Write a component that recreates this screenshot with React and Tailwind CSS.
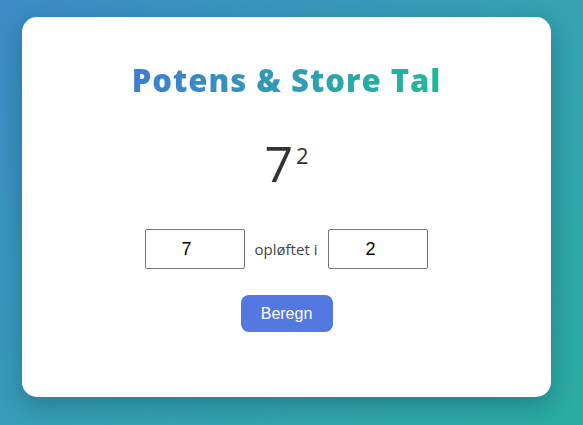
export default function App() {
  return (
    <div className="min-h-[425px] w-[583px] bg-[linear-gradient(135deg,#3d8bc7_0%,#36a0b6_50%,#2aaca0_100%)] pl-[22px] pt-[17px] font-['Open_Sans',sans-serif]">
      <div className="flex h-[380px] w-[529px] flex-col items-center rounded-[15px] bg-white shadow-[0_8px_24px_rgba(0,40,60,0.3)]">
        <h1 className="mt-[41px] bg-[linear-gradient(90deg,#3e7dd2,#22b99a)] bg-clip-text text-[31px] font-extrabold leading-[44px] tracking-[1px] text-transparent">
          Potens &amp; Store Tal
        </h1>
        <div className="mt-[36px] flex h-[60px] items-start leading-none text-[#333]">
          <span className="text-[50px] font-normal">7</span>
          <span className="ml-[3px] mt-[6px] text-[22px] font-normal">2</span>
        </div>
        <div className="mt-[31px] flex items-center gap-[10px]">
          <input
            defaultValue="7"
            className="h-[40px] w-[100px] rounded-[2px] border border-[#767676] pr-[16px] text-center font-['Liberation_Sans',sans-serif] text-[18px] text-black outline-none"
          />
          <span className="text-[15px] text-[#444]">opløftet i</span>
          <input
            defaultValue="2"
            className="ml-[1px] h-[40px] w-[100px] rounded-[2px] border border-[#767676] pr-[16px] text-center font-['Liberation_Sans',sans-serif] text-[18px] text-black outline-none"
          />
        </div>
        <button className="mt-[26px] h-[37px] w-[92px] rounded-[8px] bg-[#5378e0] font-['Liberation_Sans',sans-serif] text-[16px] text-white">
          Beregn
        </button>
      </div>
    </div>
  );
}
